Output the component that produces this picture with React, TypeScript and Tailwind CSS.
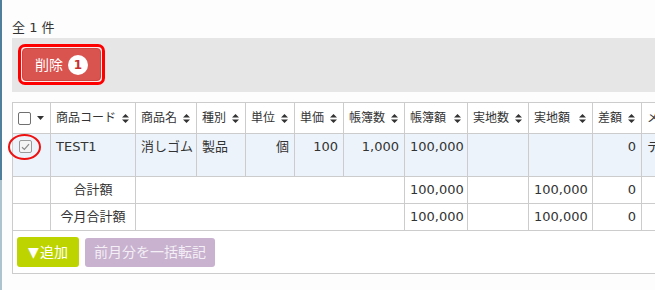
import React from "react";

function SortIcon() {
  return (
    <svg width="7" height="9" viewBox="0 0 7 9" className="shrink-0">
      <path d="M0 3.6 L3.5 0 L7 3.6 Z M0 5.4 L7 5.4 L3.5 9 Z" fill="#333" />
    </svg>
  );
}

const cols = [38, 85, 61, 49, 49, 49, 61, 63, 61, 64, 49, 120];
const headers = ["商品コード", "商品名", "種別", "単位", "単価", "帳簿数", "帳簿額", "実地数", "実地額", "差額", "メモ"];

export default function App() {
  const cell = "border border-[#cccccc] px-[5px]";
  return (
    <div className="relative w-[655px] h-[290px] overflow-hidden bg-[#fdfdfd] text-[#333] font-['DejaVu_Sans','Noto_Sans_CJK_JP',sans-serif] text-[13px] flex">
      <div className="w-[2px] shrink-0 flex flex-col">
        <div className="h-[180px] bg-[#4f7f9a]" />
        <div className="flex-1 bg-[#adc3ce]" />
      </div>
      <div className="flex-1 min-w-0 pl-[10px]">
        <div className="pt-[18px] leading-[20px] text-[13px]">全 1 件</div>
        <div className="h-[54px] bg-[#e6e6e6] pl-[6px] pt-[6px] w-[700px]">
          <div className="inline-block rounded-[7px] border-[3px] border-[#ff0000] bg-[#fbeaea] p-px">
            <button className="w-[79px] h-[33px] rounded-[4px] bg-[#d9534f] border border-[#d0443f] text-white text-[14px] flex items-center justify-center gap-[5px]">
              <span className="leading-none">削除</span>
              <span className="w-[20px] h-[20px] rounded-full bg-white text-[#c9302c] text-[12px] font-bold flex items-center justify-center leading-none">1</span>
            </button>
          </div>
        </div>
        <table className="mt-[10px] border-collapse table-fixed w-[749px]">
          <colgroup>
            {cols.map((w, i) => (
              <col key={i} style={{ width: w }} />
            ))}
          </colgroup>
          <tbody>
            <tr className="h-[31px] bg-white">
              <td className={`${cell} px-[4px]`}>
                <div className="flex items-center gap-[6px]">
                  <span className="w-[13px] h-[13px] border border-[#707070] bg-white rounded-[2px]" />
                  <svg width="7" height="4" viewBox="0 0 7 4">
                    <path d="M0 0 L7 0 L3.5 4 Z" fill="#333" />
                  </svg>
                </div>
              </td>
              {headers.map((h) => (
                <td key={h} className={`${cell} pr-[6px] whitespace-nowrap overflow-hidden`}>
                  <div className="flex items-center justify-between">
                    <span className="text-[12px]">{h}</span>
                    <SortIcon />
                  </div>
                </td>
              ))}
            </tr>
            <tr className="h-[43px] bg-[#edf3fb] align-top leading-[18px]">
              <td className={`${cell} pt-[5px]`}>
                <span className="mt-[1px] ml-[1px] w-[13px] h-[13px] border border-[#9a9a9a] bg-[#f4f4f4] rounded-[2px] flex items-center justify-center">
                  <svg width="9" height="8" viewBox="0 0 9 8">
                    <path d="M1 4.2 L3.4 6.5 L8 1.2" stroke="#8a8a8a" strokeWidth="1.2" fill="none" />
                  </svg>
                </span>
              </td>
              <td className={`${cell} pt-[4px]`}>TEST1</td>
              <td className={`${cell} pt-[4px] whitespace-nowrap overflow-hidden`}>消しゴム</td>
              <td className={`${cell} pt-[4px]`}>製品</td>
              <td className={`${cell} pt-[4px] text-right`}>個</td>
              <td className={`${cell} pt-[4px] text-right`}>100</td>
              <td className={`${cell} pt-[4px] text-right`}>1,000</td>
              <td className={`${cell} pt-[4px] text-right`}>100,000</td>
              <td className={`${cell} pt-[4px]`}></td>
              <td className={`${cell} pt-[4px]`}></td>
              <td className={`${cell} pt-[4px] text-right`}>0</td>
              <td className={`${cell} pt-[4px] px-[2px] whitespace-nowrap overflow-hidden`}>テスト</td>
            </tr>
            {["合計額", "今月合計額"].map((label) => (
              <tr key={label} className="h-[27px] bg-white">
                <td className={cell}></td>
                <td className={`${cell} text-center`}>{label}</td>
                <td className={cell} colSpan={5}></td>
                <td className={`${cell} text-right`}>100,000</td>
                <td className={cell}></td>
                <td className={`${cell} text-right`}>100,000</td>
                <td className={`${cell} text-right`}>0</td>
                <td className={cell}></td>
              </tr>
            ))}
            <tr className="bg-white">
              <td colSpan={12} className="border border-[#cccccc] pl-[4px] pt-[6px] pb-[6px]">
                <div className="flex items-start gap-[6px]">
                  <button className="h-[30px] w-[62px] rounded-[3px] bg-[#bdd400] text-white text-[14px] flex items-center justify-center">
                    <span className="font-['DejaVu_Sans'] text-[14px] mr-[1px]">▼</span>追加
                  </button>
                  <button className="h-[29px] mt-px w-[130px] rounded-[3px] bg-[#c8b2cf] text-[#f4eff6] text-[14px] flex items-center justify-center">
                    前月分を一括転記
                  </button>
                </div>
              </td>
            </tr>
          </tbody>
        </table>
      </div>
      <div className="absolute left-[8px] top-[134px] w-[33px] h-[26px] rounded-[50%] border-2 border-[#ee1111]" />
    </div>
  );
}
